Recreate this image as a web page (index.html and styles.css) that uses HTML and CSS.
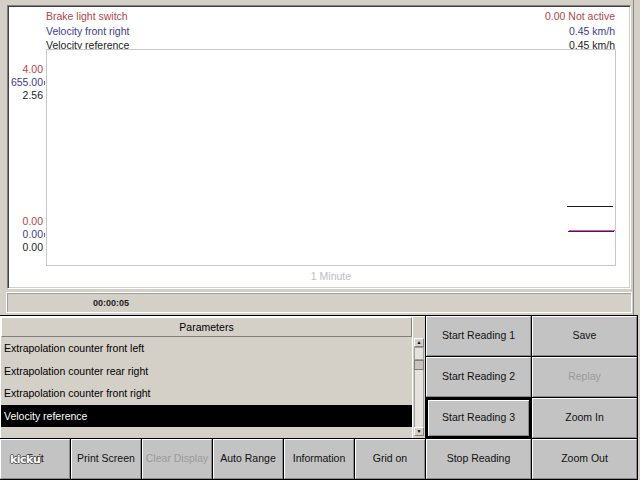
FILE: index.html
```html
<!DOCTYPE html>
<html>
<head>
<meta charset="utf-8">
<link rel="stylesheet" href="styles.css">
</head>
<body>
<div class="app">
  <div class="top">
    <div class="plot">
      <div class="legend">
        <div class="lg red"><span>Brake light switch</span><span>0.00 Not active</span></div>
        <div class="lg blue"><span>Velocity front right</span><span>0.45 km/h</span></div>
        <div class="lg dark"><span>Velocity reference</span><span>0.45 km/h</span></div>
      </div>
      <div class="axis">
        <div class="grp">
          <span class="red">4.00</span>
          <span class="blue">655.00<i class="sliver"></i></span>
          <span class="dark">2.56</span>
        </div>
        <div class="grp">
          <span class="red">0.00</span>
          <span class="blue">0.00<i class="sliver"></i></span>
          <span class="dark">0.00</span>
        </div>
      </div>
      <div class="chart">
        <svg class="lines" width="568" height="215" viewBox="0 0 568 215">
          <line x1="520" y1="156.5" x2="566" y2="156.5" stroke="#1a1a1a" stroke-width="1"/>
          <line x1="521" y1="181.5" x2="567" y2="181.5" stroke="#3a1a7a" stroke-width="1"/>
          <line x1="522" y1="180.5" x2="568" y2="180.5" stroke="#e0589a" stroke-width="1"/>
        </svg>
      </div>
      <div class="xlabel">1 Minute</div>
    </div>
    <div class="status"><span class="time">00:00:05</span></div>
  </div>
  <div class="bottom">
    <div class="list">
      <div class="pane">
        <div class="head">Parameters</div>
        <div class="item">Extrapolation counter front left</div>
        <div class="item">Extrapolation counter rear right</div>
        <div class="item">Extrapolation counter front right</div>
        <div class="item sel">Velocity reference</div>
      </div>
      <div class="scroll">
        <div class="sbtn">&#9650;</div>
        <div class="seg"></div>
        <div class="thumb"></div>
        <div class="track"></div>
        <div class="sbtn">&#9660;</div>
      </div>
    </div>
    <div class="btn">Start Reading 1</div>
    <div class="btn">Save</div>
    <div class="btn">Start Reading 2</div>
    <div class="btn off">Replay</div>
    <div class="btn focus">Start Reading 3</div>
    <div class="btn">Zoom In</div>
    <div class="row">
      <div class="btn">Exit</div>
      <div class="btn">Print Screen</div>
      <div class="btn off">Clear Display</div>
      <div class="btn">Auto Range</div>
      <div class="btn">Information</div>
      <div class="btn">Grid on</div>
    </div>
    <div class="btn">Stop Reading</div>
    <div class="btn">Zoom Out</div>
  </div>
  <span class="mark">kicku</span>
</div>
</body>
</html>
```

FILE: styles.css
```css
html, body {
  margin: 0;
  padding: 0;
  background: #d4d0c8;
}
body {
  width: 640px;
  height: 480px;
  overflow: hidden;
  font-family: "Liberation Sans", Arial, sans-serif;
  font-size: 10.5px;
  color: #000;
}
.app {
  position: relative;
  width: 640px;
  height: 480px;
}
.top {
  height: 315px;
  width: 634px;
  border-right: 1px solid #8a8a8a;
  box-sizing: border-box;
  padding: 5px 0 0 7px;
}
.plot {
  width: 624px;
  height: 284px;
  box-sizing: border-box;
  background: #fff;
  border-top: 1px solid #808080;
  border-left: 1px solid #808080;
  border-right: 1px solid #fff;
  border-bottom: 1px solid #fff;
  box-shadow: inset 1px 1px 0 #404040, inset -1px -1px 0 #d4d0c8;
  padding-top: 3px;
  display: grid;
  grid-template-columns: 38px 570px;
  grid-template-rows: 40px 217px 17px;
}
.red { color: #b04646; }
.blue { color: #3c3c8c; }
.dark { color: #222; }
.legend {
  grid-column: 2;
  grid-row: 1;
  padding-right: 1px;
}
.lg {
  display: flex;
  justify-content: space-between;
  height: 14.5px;
  line-height: 15px;
  white-space: nowrap;
}
.axis {
  grid-column: 1;
  grid-row: 2;
  display: flex;
  flex-direction: column;
  justify-content: space-between;
  padding: 14px 3px 12px 0;
  text-align: right;
}
.grp span {
  display: block;
  height: 13px;
  line-height: 13px;
  white-space: nowrap;
}
.sliver {
  display: inline-block;
  width: 1px;
  height: 4px;
  margin-left: 1px;
  margin-right: -2px;
  vertical-align: middle;
  background: #6a6aa8;
}
.chart {
  grid-column: 2;
  grid-row: 2;
  position: relative;
  background: #fff;
  border: 1px solid #c8c8c8;
}
.lines {
  display: block;
}
.xlabel {
  grid-column: 2;
  grid-row: 3;
  text-align: center;
  color: #bdbdbd;
  padding-top: 3px;
  line-height: 14px;
}
.status {
  margin: 3px 0 0 -1px;
  width: 626px;
  height: 21px;
  box-sizing: border-box;
  border: 1px solid #fff;
  box-shadow: inset 1px 1px 0 #a0a0a0;
  display: flex;
  align-items: center;
}
.time {
  width: 208px;
  text-align: center;
  font-family: "Liberation Sans", Arial, sans-serif;
  font-weight: bold;
  font-size: 9px;
  color: #222;
}
.bottom {
  width: 638px;
  height: 165px;
  box-sizing: border-box;
  background: #000;
  padding: 1px 1px 1px 0;
  display: grid;
  grid-template-columns: 425px 105px 105px;
  grid-template-rows: repeat(4, 40px);
  gap: 1px;
}
.list {
  grid-column: 1;
  grid-row: 1 / 4;
  background: #d4d0c8;
  border-top: 1px solid #fff;
  border-left: 1px solid #fff;
  display: grid;
  grid-template-columns: 411px 13px;
}
.pane {
  display: flex;
  flex-direction: column;
}
.head {
  height: 20px;
  box-sizing: border-box;
  line-height: 18px;
  text-align: center;
  border-top: 1px solid #fff;
  border-left: 1px solid #fff;
  border-bottom: 1px solid #808080;
  border-right: 1px solid #808080;
}
.item {
  height: 22.5px;
  line-height: 23.5px;
  padding-left: 3px;
  white-space: nowrap;
}
.item.sel {
  background: #000;
  color: #fff;
}
.scroll {
  display: flex;
  flex-direction: column;
  padding: 21px 1px 2px 1px;
  border-left: 1px solid #fff;
  box-sizing: border-box;
}
.sbtn {
  height: 9px;
  box-sizing: border-box;
  border: 1px solid #808080;
  border-top-color: #fff;
  border-left-color: #fff;
  font-size: 5px;
  line-height: 7px;
  text-align: center;
  color: #000;
}
.seg {
  height: 13px;
  border: 1px solid #a0a0a0;
  box-sizing: border-box;
  background: #e4e2dc;
}
.thumb {
  height: 10px;
  border: 1px solid #808080;
  box-sizing: border-box;
  background: #c8c4bc;
}
.track {
  flex: 1;
  background: #e4e2dc;
  border-left: 1px solid #a0a0a0;
  border-right: 1px solid #a0a0a0;
}
.btn {
  background: #c3c3c3;
  box-sizing: border-box;
  border-top: 1px solid #fff;
  border-left: 1px solid #fff;
  border-right: 1px solid #8a8a8a;
  border-bottom: 1px solid #8a8a8a;
  display: flex;
  align-items: center;
  justify-content: center;
  white-space: nowrap;
  color: #111;
  padding-bottom: 2px;
}
.btn.off {
  color: #9a9a9a;
}
.btn.focus {
  border: 2px solid #000;
  box-shadow: inset 1px 1px 0 #fff, inset -1px -1px 0 #8a8a8a;
}
.row {
  display: grid;
  grid-template-columns: repeat(6, 70px);
  gap: 1px;
  background: #000;
}
.mark {
  position: absolute;
  left: 10px;
  top: 453px;
  font-family: "DejaVu Sans", sans-serif;
  font-weight: bold;
  font-size: 11px;
  color: #fff;
  letter-spacing: -0.5px;
  text-shadow: 1px 0 0 #555, -1px 0 0 #555, 0 1px 0 #555, 0 -1px 0 #555;
}
```
